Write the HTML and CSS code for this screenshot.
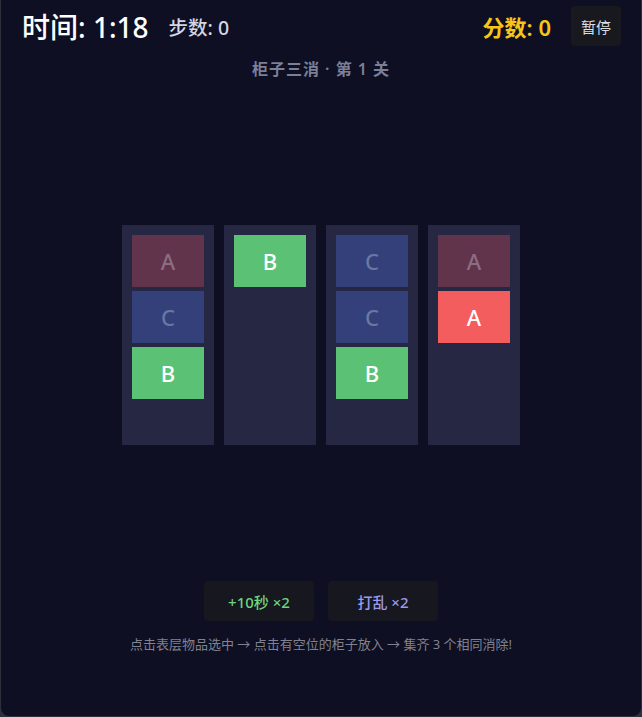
FILE: index.html
```html
<!DOCTYPE html>
<html lang="zh-CN">
<head>
    <meta charset="UTF-8">
    <meta name="viewport" content="width=device-width, initial-scale=1.0">
    <title>柜子三消</title>
    <link rel="stylesheet" href="styles.css">
</head>
<body>
    <div class="game">
        <!-- 顶部状态栏 -->
        <div class="topbar">
            <div class="stat-left">
                <span class="timer">时间: 1:18</span>
                <span class="moves">步数: 0</span>
            </div>
            <div class="stat-right">
                <span class="score">分数: 0</span>
                <button class="pause-btn">暂停</button>
            </div>
        </div>

        <div class="level-title">柜子三消 · 第 1 关</div>

        <!-- 柜子 -->
        <div class="board">
            <div class="cabinet">
                <div class="item item-a dim">A</div>
                <div class="item item-c dim">C</div>
                <div class="item item-b">B</div>
            </div>
            <div class="cabinet">
                <div class="item item-b">B</div>
            </div>
            <div class="cabinet">
                <div class="item item-c dim">C</div>
                <div class="item item-c dim">C</div>
                <div class="item item-b">B</div>
            </div>
            <div class="cabinet">
                <div class="item item-a dim">A</div>
                <div class="item item-a">A</div>
            </div>
        </div>

        <!-- 道具 -->
        <div class="tools">
            <button class="tool-btn tool-time">+10秒 ×2</button>
            <button class="tool-btn tool-shuffle">打乱 ×2</button>
        </div>

        <div class="hint">点击表层物品选中 → 点击有空位的柜子放入 → 集齐 3 个相同消除!</div>
    </div>
</body>
</html>
```

FILE: styles.css
```css
* {
    margin: 0;
    padding: 0;
    box-sizing: border-box;
    font-family: 'Noto Sans', 'Noto Sans CJK SC', sans-serif;
}

body {
    background-color: #2c303a;
    width: 642px;
    height: 717px;
    overflow: hidden;
}

.game {
    height: 716px;
    margin: 0 1px;
    background-color: #0e0f22;
    border-radius: 0 0 8px 8px;
    display: flex;
    flex-direction: column;
}

/* 顶部状态栏 */
.topbar {
    display: flex;
    justify-content: space-between;
    align-items: center;
    padding: 6px 20px 0 21px;
    height: 46px;
}

.stat-left, .stat-right {
    display: flex;
    align-items: center;
}

.timer {
    color: #ffffff;
    font-size: 28px;
    font-weight: 500;
    margin-right: 20px;
}

.moves {
    color: #d4d6e2;
    font-size: 19.5px;
    font-weight: 500;
}

.score {
    color: #f5c518;
    font-size: 22px;
    font-weight: 600;
    margin-right: 20px;
}

.pause-btn {
    width: 50px;
    height: 40px;
    background-color: #18191f;
    color: #dcdde6;
    border: none;
    border-radius: 4px;
    font-size: 15px;
}

.level-title {
    text-align: center;
    color: #7c7f98;
    font-size: 16px;
    font-weight: 600;
    letter-spacing: 1px;
    margin-top: 10px;
}

/* 柜子 */
.board {
    display: flex;
    justify-content: center;
    gap: 10px;
    margin-top: 145px;
}

.cabinet {
    width: 92px;
    height: 220px;
    background-color: #262743;
    padding: 10px;
    display: flex;
    flex-direction: column;
    gap: 4px;
}

.item {
    height: 52px;
    display: flex;
    align-items: center;
    justify-content: center;
    color: #ffffff;
    font-size: 22px;
    font-weight: 500;
}

.item-a {
    background-color: #f45d5e;
}

.item-b {
    background-color: #5bc275;
}

.item-c {
    background-color: #334079;
}

.item-a.dim {
    background-color: #62344c;
    color: #8c6e83;
}

.item-c.dim {
    color: #6a76a3;
}

/* 道具 */
.tools {
    display: flex;
    justify-content: center;
    gap: 14px;
    margin-top: 136px;
}

.tool-btn {
    width: 110px;
    height: 40px;
    background-color: #16171f;
    border: none;
    border-radius: 4px;
    font-size: 15px;
    font-weight: 500;
}

.tool-time {
    color: #6fd47c;
}

.tool-shuffle {
    color: #9a9bee;
}

.hint {
    text-align: center;
    color: #80828f;
    font-size: 13px;
    margin-top: 13px;
}
```
